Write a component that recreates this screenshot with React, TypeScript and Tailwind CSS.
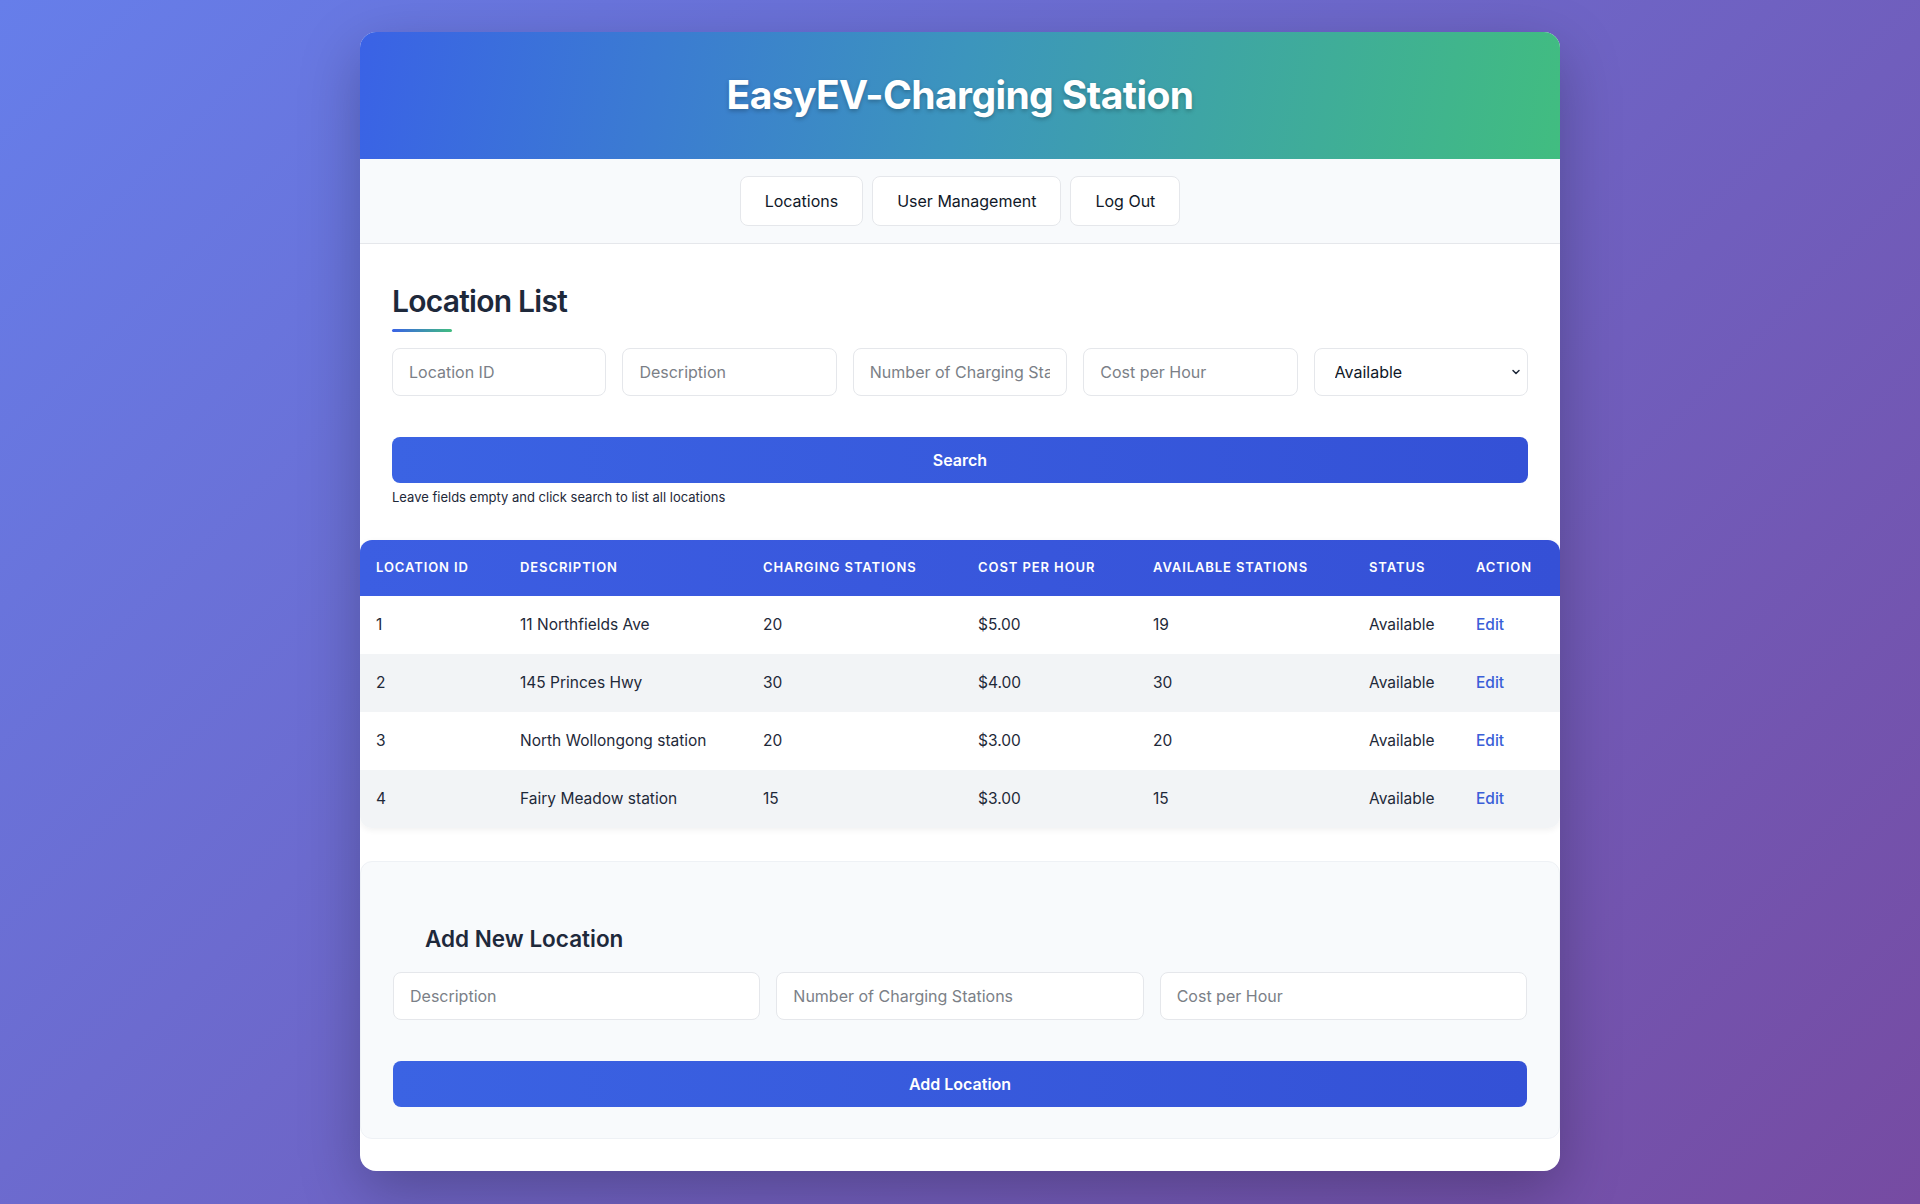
import { ChevronDown } from 'lucide-react';

const locations = [
  { id: 1, description: '11 Northfields Ave', stations: 20, cost: '$5.00', available: 19, status: 'Available' },
  { id: 2, description: '145 Princes Hwy', stations: 30, cost: '$4.00', available: 30, status: 'Available' },
  { id: 3, description: 'North Wollongong station', stations: 20, cost: '$3.00', available: 20, status: 'Available' },
  { id: 4, description: 'Fairy Meadow station', stations: 15, cost: '$3.00', available: 15, status: 'Available' },
];

const inputClass =
  'h-[48px] w-full rounded-lg border border-gray-200 bg-white px-4 text-base text-gray-800 outline-none placeholder:text-[#7b7f87]';

const App = () => {
  return (
    <div className="min-h-screen bg-[linear-gradient(135deg,#667eea_0%,#764ba2_100%)] py-8 font-['Inter',sans-serif] text-gray-800">
      <div className="mx-auto w-[1200px] overflow-hidden rounded-2xl bg-white pb-8 shadow-[0_20px_60px_rgba(0,0,0,0.25)]">
        <header className="flex h-[127px] items-center justify-center bg-[linear-gradient(100deg,#3a62e6_0%,#3c95bd_50%,#41bd80_100%)]">
          <h1 className="text-[39px] font-bold tracking-[-0.015em] text-white [text-shadow:0_2px_4px_rgba(0,0,0,0.25)]">
            EasyEV-Charging Station
          </h1>
        </header>

        <nav className="flex justify-center gap-[9px] border-b border-gray-200 bg-[#f8fafc] pt-[17px] pb-[17px]">
          {['Locations', 'User Management', 'Log Out'].map((label) => (
            <button
              key={label}
              className="h-[50px] rounded-lg border border-gray-200 bg-white px-6 text-base font-normal text-gray-900"
            >
              {label}
            </button>
          ))}
        </nav>

        <section className="px-8 pt-[39px]">
          <h2 className="text-[30px] leading-9 font-semibold tracking-tight text-[#1e293b]">Location List</h2>
          <div className="mt-[10px] h-[3px] w-[60px] rounded-full bg-[linear-gradient(90deg,#3a62e6,#41bd80)]" />

          <div className="mt-4 grid grid-cols-5 gap-4">
            <input className={inputClass} placeholder="Location ID" />
            <input className={inputClass} placeholder="Description" />
            <input className={inputClass} placeholder="Number of Charging Stations" />
            <input className={inputClass} placeholder="Cost per Hour" />
            <div className="relative">
              <select className="h-[48px] w-full appearance-none rounded-lg border border-gray-200 bg-white pl-5 text-base text-gray-900 outline-none">
                <option>Available</option>
                <option>Unavailable</option>
              </select>
              <ChevronDown className="pointer-events-none absolute top-1/2 right-[6px] h-3 w-3 -translate-y-1/2 text-gray-800" strokeWidth={3} />
            </div>
          </div>

          <button className="mt-[41px] h-[46px] w-full rounded-lg bg-[linear-gradient(90deg,#3b63e3,#3451d6)] text-base font-semibold text-white">
            Search
          </button>
          <p className="mt-[5px] text-[13px] leading-[18px] text-gray-800">Leave fields empty and click search to list all locations</p>
        </section>

        <div className="mt-[34px] overflow-hidden rounded-xl shadow-[0_2px_6px_rgba(0,0,0,0.06)]">
          <table className="w-full table-fixed border-collapse text-left">
            <colgroup>
              <col className="w-[144px]" />
              <col className="w-[243px]" />
              <col className="w-[215px]" />
              <col className="w-[175px]" />
              <col className="w-[216px]" />
              <col className="w-[107px]" />
              <col />
            </colgroup>
            <thead>
              <tr className="h-[56px] bg-[linear-gradient(90deg,#3c5ee2,#3550d6)] text-[13px] tracking-[0.07em] text-white uppercase">
                <th className="px-4 font-semibold">Location ID</th>
                <th className="px-4 font-semibold">Description</th>
                <th className="px-4 font-semibold">Charging Stations</th>
                <th className="px-4 font-semibold">Cost per Hour</th>
                <th className="px-4 font-semibold">Available Stations</th>
                <th className="px-4 font-semibold">Status</th>
                <th className="px-4 font-semibold">Action</th>
              </tr>
            </thead>
            <tbody className="text-[15.5px] text-gray-800">
              {locations.map((loc, i) => (
                <tr key={loc.id} className={`h-[58px] ${i % 2 === 1 ? 'bg-[#f2f4f6]' : 'bg-white'}`}>
                  <td className="px-4">{loc.id}</td>
                  <td className="px-4">{loc.description}</td>
                  <td className="px-4">{loc.stations}</td>
                  <td className="px-4">{loc.cost}</td>
                  <td className="px-4">{loc.available}</td>
                  <td className="px-4">{loc.status}</td>
                  <td className="px-4">
                    <a className="font-medium text-[#3b5fd8]" href="#">
                      Edit
                    </a>
                  </td>
                </tr>
              ))}
            </tbody>
          </table>
        </div>

        <section className="mt-[33px] rounded-xl border border-[#eef1f5] bg-[#f8fafc] px-8 pt-[61px] pb-[31px]">
          <h3 className="ml-8 text-[22.5px] leading-8 font-semibold text-[#1e293b]">Add New Location</h3>
          <div className="mt-[17px] grid grid-cols-3 gap-4">
            <input className={`${inputClass} h-[47px]`} placeholder="Description" />
            <input className={`${inputClass} h-[47px]`} placeholder="Number of Charging Stations" />
            <input className={`${inputClass} h-[47px]`} placeholder="Cost per Hour" />
          </div>
          <button className="mt-[41px] h-[46px] w-full rounded-lg bg-[linear-gradient(90deg,#3b63e3,#3451d6)] text-base font-semibold text-white">
            Add Location
          </button>
        </section>
      </div>
    </div>
  );
};

export default App;
